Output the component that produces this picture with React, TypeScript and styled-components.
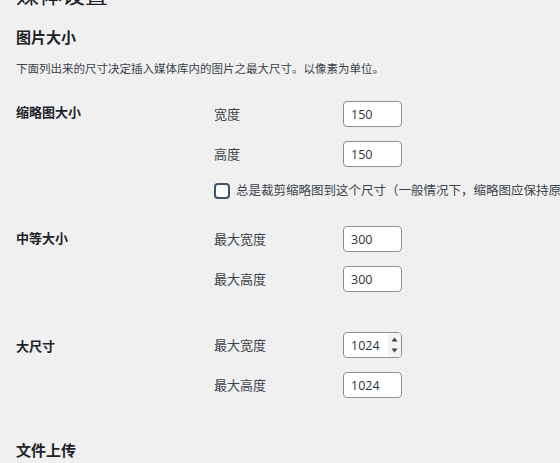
import styled, { createGlobalStyle } from 'styled-components';

const GlobalStyle = createGlobalStyle`
  html, body {
    margin: 0;
    padding: 0;
    background: #f0f0f1;
    overflow: hidden;
  }
  body {
    font-family: "Open Sans", "Noto Sans CJK SC", sans-serif;
    color: #3c434a;
  }
`;

const Page = styled.div`
  padding: 0 0 0 16px;
  width: 544px;
  height: 463px;
  overflow: hidden;
`;

const PageTitle = styled.h1`
  margin: -20px 0 0;
  font-size: 23px;
  line-height: 29px;
  font-weight: 400;
  color: #1d2327;
`;

const SectionTitle = styled.h2<{ $top: number }>`
  margin: ${p => p.$top}px 0 0;
  font-size: 15px;
  line-height: 20px;
  font-weight: 700;
  color: #1d2327;
`;

const Description = styled.p`
  margin: 13px 0 0;
  font-size: 11.5px;
  line-height: 17px;
  color: #3c434a;
  white-space: nowrap;
`;

const Section = styled.div<{ $top: number }>`
  display: flex;
  align-items: flex-start;
  margin-top: ${p => p.$top}px;
`;

const RowLabel = styled.div<{ $offset: number }>`
  width: 198px;
  flex: none;
  padding-top: ${p => p.$offset}px;
  font-size: 13px;
  line-height: 20px;
  font-weight: 700;
  color: #1d2327;
`;

const Fields = styled.div`
  display: flex;
  flex-direction: column;
  gap: 14px;
`;

const FieldRow = styled.label`
  display: flex;
  align-items: center;
  height: 26px;
`;

const FieldLabel = styled.span`
  width: 129px;
  font-size: 13px;
  line-height: 18px;
  color: #3c434a;
`;

const InputWrap = styled.span`
  position: relative;
  display: block;
  height: 26px;
`;

const NumberInput = styled.input`
  display: block;
  box-sizing: border-box;
  width: 59px;
  height: 26px;
  margin: 0;
  padding: 0 7px;
  border: 1px solid #8c8f94;
  border-radius: 4px;
  background: #fff;
  font-family: "Open Sans", sans-serif;
  font-size: 12.5px;
  color: #2c3338;
  outline: none;
`;

const Spinner = styled.span`
  position: absolute;
  top: 1px;
  right: 1px;
  bottom: 1px;
  width: 13px;
  border-radius: 0 3px 3px 0;
  background: #f3f3f3;
  display: flex;
  flex-direction: column;
  align-items: center;
  justify-content: space-between;
  padding: 4px 0;
  box-sizing: border-box;
`;

const CheckRow = styled.label`
  display: flex;
  align-items: center;
  height: 18px;
  line-height: 18px;
  margin-top: 1px;
  white-space: nowrap;
  font-size: 12.5px;
  color: #3c434a;
`;

const Checkbox = styled.span`
  box-sizing: border-box;
  width: 16px;
  height: 16px;
  flex: none;
  border: 2px solid #3b536b;
  border-radius: 4px;
  background: #fff;
  margin-right: 6px;
`;

type TField = { label: string; value: string; spin?: boolean };

const Arrow = ({ up }: { up?: boolean }) => (
  <svg width="7" height="5" viewBox="0 0 7 5">
    <path d={up ? 'M0.5 4.5 L3.5 0.5 L6.5 4.5 Z' : 'M0.5 0.5 L3.5 4.5 L6.5 0.5 Z'} fill="#3c434a" />
  </svg>
);

const FieldList = ({ fields }: { fields: TField[] }) => (
  <>
    {fields.map(f => (
      <FieldRow key={f.label}>
        <FieldLabel>{f.label}</FieldLabel>
        <InputWrap>
          <NumberInput type="text" defaultValue={f.value} />
          {f.spin && (
            <Spinner>
              <Arrow up />
              <Arrow />
            </Spinner>
          )}
        </InputWrap>
      </FieldRow>
    ))}
  </>
);

const App = () => (
  <Page>
    <GlobalStyle />
    <PageTitle>媒体设置</PageTitle>
    <SectionTitle $top={18}>图片大小</SectionTitle>
    <Description>下面列出来的尺寸决定插入媒体库内的图片之最大尺寸。以像素为单位。</Description>

    <Section $top={24}>
      <RowLabel $offset={1}>缩略图大小</RowLabel>
      <Fields>
        <FieldList
          fields={[
            { label: '宽度', value: '150' },
            { label: '高度', value: '150' },
          ]}
        />
        <CheckRow>
          <Checkbox />
          总是裁剪缩略图到这个尺寸（一般情况下，缩略图应保持原始比例）
        </CheckRow>
      </Fields>
    </Section>

    <Section $top={26}>
      <RowLabel $offset={2}>中等大小</RowLabel>
      <Fields>
        <FieldList
          fields={[
            { label: '最大宽度', value: '300' },
            { label: '最大高度', value: '300' },
          ]}
        />
      </Fields>
    </Section>

    <Section $top={40}>
      <RowLabel $offset={4}>大尺寸</RowLabel>
      <Fields>
        <FieldList
          fields={[
            { label: '最大宽度', value: '1024', spin: true },
            { label: '最大高度', value: '1024' },
          ]}
        />
      </Fields>
    </Section>

    <SectionTitle $top={42}>文件上传</SectionTitle>
  </Page>
);

export default App;
